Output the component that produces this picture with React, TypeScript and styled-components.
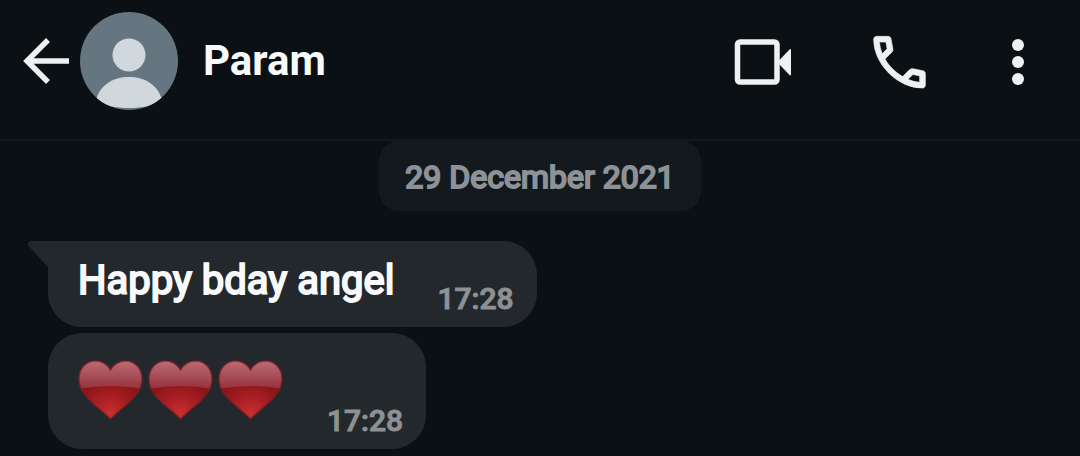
import React from "react";
import styled, { createGlobalStyle } from "styled-components";

const GlobalStyle = createGlobalStyle`
  *, *::before, *::after { box-sizing: border-box; }
  html { background: #0b1014; }
  body {
    margin: 0;
    background: #0b1014;
    font-family: Roboto, "Liberation Sans", sans-serif;
    color: #f7f9fb;
  }
`;

const Screen = styled.div`
  min-height: 100vh;
  display: flex;
  flex-direction: column;
`;

const Header = styled.header`
  display: flex;
  align-items: center;
  padding: 12px 43px 29px 20px;
  border-bottom: 2px solid #13191d;
`;

const IconButton = styled.button<{ $width: number }>`
  display: flex;
  align-items: center;
  justify-content: center;
  flex: none;
  width: ${(p) => p.$width}px;
  height: 72px;
  padding: 0;
  border: 0;
  background: none;
  color: #eef0f2;
  cursor: pointer;
`;

const Avatar = styled.svg`
  flex: none;
  display: block;
  width: 98px;
  height: 98px;
  margin-left: 8px;
`;

const ContactName = styled.h1`
  flex: 1;
  min-width: 0;
  margin: 0 0 0 25px;
  font-size: 42px;
  line-height: 48px;
  font-weight: 700;
`;

const Actions = styled.div`
  display: flex;
  gap: 64px;
`;

const Chat = styled.main`
  display: flex;
  flex-direction: column;
  align-items: flex-start;
  padding: 0 48px 6px;
`;

const DateChip = styled.time`
  align-self: center;
  margin-bottom: 30px;
  padding: 16px 26px 14px;
  border-radius: 20px;
  background: #13191c;
  color: #8c9297;
  font-size: 32px;
  line-height: 40px;
  font-weight: 400;
  -webkit-text-stroke: 2px currentColor;
`;

const MessageList = styled.ol`
  display: flex;
  flex-direction: column;
  align-items: flex-start;
  gap: 6px;
  margin: 0;
  padding: 0;
  list-style: none;
`;

const Bubble = styled.li<{ $tail?: boolean }>`
  position: relative;
  display: flex;
  align-items: flex-end;
  gap: 43px;
  padding: 16px 23px 12px 30px;
  border-radius: ${(p) => (p.$tail ? "0 34px 34px 34px" : "34px")};
  background: #23282c;
`;

const Tail = styled.svg`
  position: absolute;
  top: 0;
  left: -20px;
  width: 21px;
  height: 28px;
`;

const MessageText = styled.p`
  margin: 0;
  padding-bottom: 10px;
  font-size: 40px;
  line-height: 48px;
  font-weight: 400;
  -webkit-text-stroke: 2px currentColor;
`;

const Hearts = styled.div`
  display: flex;
  gap: 6px;
  padding: 11px 2px 17px 0;
`;

const HeartIcon = styled.svg`
  display: block;
  width: 64px;
  height: 60px;
`;

const Stamp = styled.time`
  color: #8e9193;
  font-size: 30px;
  line-height: 32px;
  font-weight: 500;
  -webkit-text-stroke: 1px currentColor;
`;

const HeartDefs = () => (
  <svg width="0" height="0" style={{ position: "absolute" }} aria-hidden="true">
    <defs>
      <radialGradient id="heartBase" gradientUnits="userSpaceOnUse" cx="32" cy="54" r="34">
        <stop offset="0" stopColor="#c83032" />
        <stop offset="0.45" stopColor="#ad2024" />
        <stop offset="1" stopColor="#8b1418" />
      </radialGradient>
      <linearGradient id="heartGloss" x1="0" y1="0" x2="0" y2="1">
        <stop offset="0" stopColor="#bd6c72" />
        <stop offset="0.5" stopColor="#a9515a" />
        <stop offset="1" stopColor="#96323a" />
      </linearGradient>
      <clipPath id="heartClip">
        <path d="M32.500 10C36.500 3.500 41.500 1 47.500 1C57 1 64 8.500 64 19C64 36 46.500 45 32.500 59C18.500 45 1 36 1 19C1 8.500 8 1 17.500 1C23.500 1 28.500 3.500 32.500 10Z" />
      </clipPath>
    </defs>
  </svg>
);

const Heart = () => (
  <HeartIcon viewBox="0 0 64 60" overflow="visible">
    <g clipPath="url(#heartClip)">
      <rect width="65" height="60" fill="url(#heartBase)" />
      <path d="M0 0H65V29Q32 23 0 29Z" fill="url(#heartGloss)" />
    </g>
    <path
      d="M32.500 10C36.500 3.500 41.500 1 47.500 1C57 1 64 8.500 64 19C64 36 46.500 45 32.500 59C18.500 45 1 36 1 19C1 8.500 8 1 17.500 1C23.500 1 28.500 3.500 32.500 10Z"
      fill="none"
      stroke="#7d1c22"
      strokeOpacity="0.7"
      strokeWidth="1.5"
    />
  </HeartIcon>
);

export default function App() {
  return (
    <Screen>
      <GlobalStyle />
      <HeartDefs />
      <Header>
        <IconButton $width={52} type="button" aria-label="Back">
          <svg width="52" height="52" viewBox="0 0 52 52" fill="none" stroke="currentColor" strokeWidth="5.500">
            <path d="M28 5L7 26L28 47M7 26H49" />
          </svg>
        </IconButton>
        <Avatar viewBox="0 0 98 98" role="img" aria-label="Param's profile photo">
          <defs>
            <clipPath id="avatarClip">
              <circle cx="49" cy="49" r="49" />
            </clipPath>
          </defs>
          <g clipPath="url(#avatarClip)">
            <rect width="98" height="98" fill="#667681" />
            <circle cx="49" cy="43" r="16.500" fill="#d0d7dd" />
            <path d="M16 88C20 73 33 65 49 65C65 65 78 73 82 88C74 94 62 96 49 96C36 96 24 94 16 88Z" fill="#d0d7dd" />
          </g>
        </Avatar>
        <ContactName>Param</ContactName>
        <Actions>
          <IconButton $width={72} type="button" aria-label="Video call">
            <svg width="72" height="72" viewBox="0 0 72 72">
              <rect x="10.500" y="17" width="39.500" height="40" rx="2.500" fill="none" stroke="currentColor" strokeWidth="5.500" />
              <path d="M52 35.500L62 25Q64 23 64 25.500V49Q64 51.500 62 49.500L52 39Z" fill="currentColor" />
            </svg>
          </IconButton>
          <IconButton $width={72} type="button" aria-label="Voice call">
            <svg width="69" height="69" viewBox="0 -970 960 960" fill="currentColor" stroke="currentColor" strokeWidth="8">
              <path d="M798-120q-125 0-247-54.500T329-329Q229-429 174.500-551T120-798q0-18 12-30t30-12h162q14 0 25 9.500t13 22.500l26 140q2 16-1 27t-11 19l-97 98q20 37 47.500 71.500T387-386q31 31 65 57.500t72 48.500l94-94q9-9 23.500-13.500T670-390l138 28q14 4 23 14.500t9 23.500v162q0 18-12 30t-30 12ZM241-600l66-66-17-94h-89q5 41 14 81t26 79Zm358 358q39 17 79.500 27t81.500 13v-88l-94-19-67 67Z" />
            </svg>
          </IconButton>
          <IconButton $width={38} type="button" aria-label="More options">
            <svg width="12" height="48" viewBox="0 0 12 48" fill="currentColor">
              <circle cx="6" cy="8" r="6" />
              <circle cx="6" cy="25" r="6" />
              <circle cx="6" cy="42" r="6" />
            </svg>
          </IconButton>
        </Actions>
      </Header>
      <Chat>
        <DateChip dateTime="2021-12-29">29 December 2021</DateChip>
        <MessageList>
          <Bubble $tail>
            <Tail viewBox="0 0 21 28" aria-hidden="true">
              <path d="M21 0H3Q-1 1 0.500 5L20 26V28H21Z" fill="#23282c" />
            </Tail>
            <MessageText>Happy bday angel</MessageText>
            <Stamp dateTime="2021-12-29T17:28">17:28</Stamp>
          </Bubble>
          <Bubble>
            <Hearts role="img" aria-label="Three red hearts">
              <Heart />
              <Heart />
              <Heart />
            </Hearts>
            <Stamp dateTime="2021-12-29T17:28">17:28</Stamp>
          </Bubble>
        </MessageList>
      </Chat>
    </Screen>
  );
}
